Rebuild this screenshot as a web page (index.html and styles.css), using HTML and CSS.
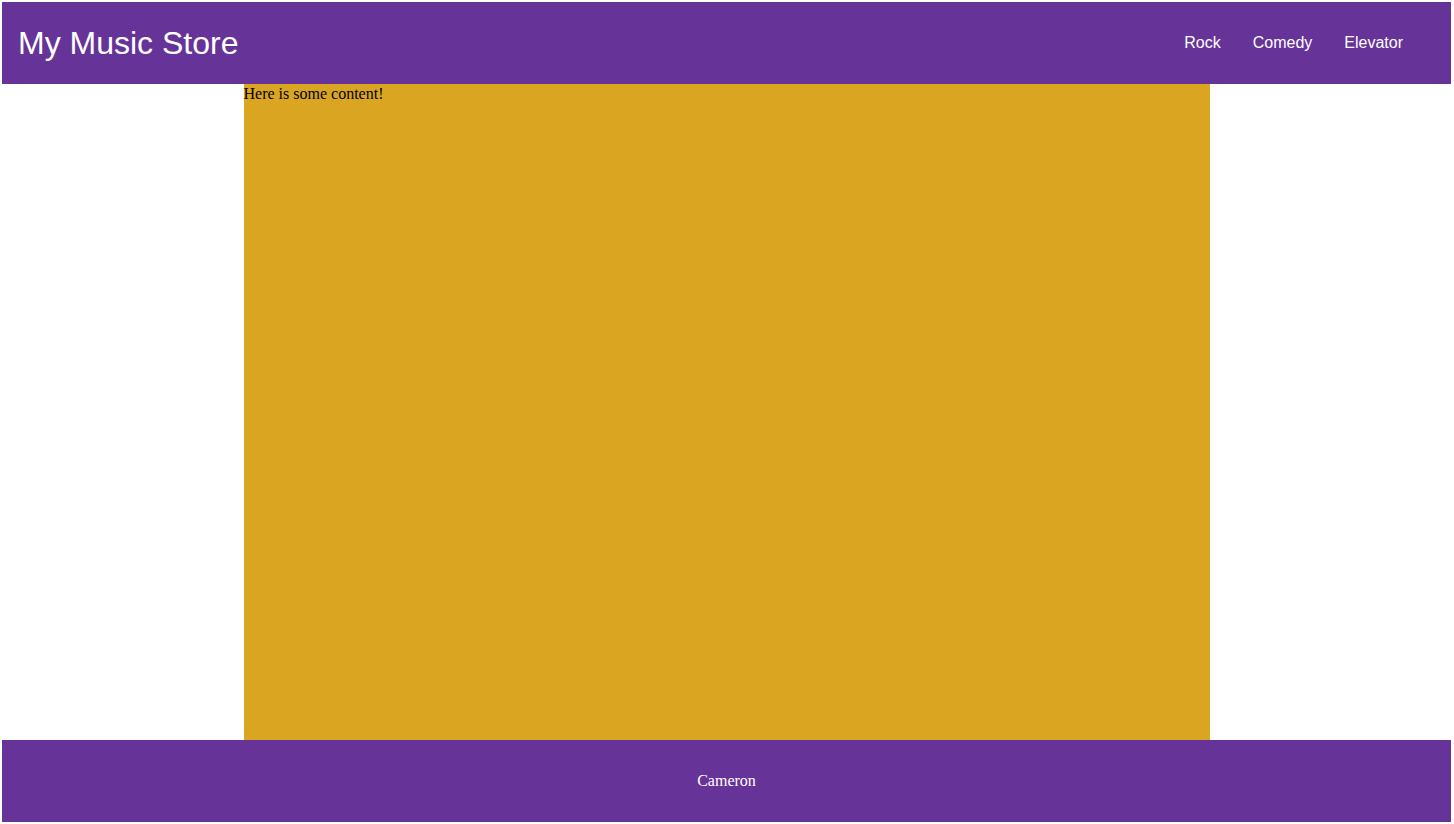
FILE: index.html
```html
<!DOCTYPE html>
<html lang="en">
<head>
<meta charset="utf-8">
<title>My Music Store</title>
<link rel="stylesheet" href="styles.css">
</head>
<body>
<header class="header">
  <div class="brand">My Music Store</div>
  <nav class="nav">
    <a class="nav-link" href="#rock">Rock</a>
    <a class="nav-link" href="#comedy">Comedy</a>
    <a class="nav-link" href="#elevator">Elevator</a>
  </nav>
</header>
<main class="content">Here is some content!</main>
<footer class="footer">Cameron</footer>
</body>
</html>
```
FILE: styles.css
```css
* {
  box-sizing: border-box;
}

body {
  margin: 0;
  padding: 2px 3px 2px 2px;
  min-height: 100vh;
  display: grid;
  grid-template-rows: 1fr 8fr 1fr;
  font: 16px/20px "Liberation Serif", "Times New Roman", serif;
  background: white;
}

.header,
.footer {
  display: flex;
  align-items: center;
  background: #663399;
  color: white;
}

.header {
  justify-content: space-between;
  padding: 0 16px;
  font-family: "Liberation Sans", Arial, sans-serif;
}

.brand {
  font-size: 32px;
  line-height: 36px;
}

.nav {
  display: flex;
  gap: 32px;
  padding-right: 32px;
}

.nav-link {
  color: white;
  text-decoration: none;
}

.content {
  width: calc(100% / 3 * 2);
  margin: 0 auto;
  background: goldenrod;
}

.footer {
  justify-content: center;
}
```
